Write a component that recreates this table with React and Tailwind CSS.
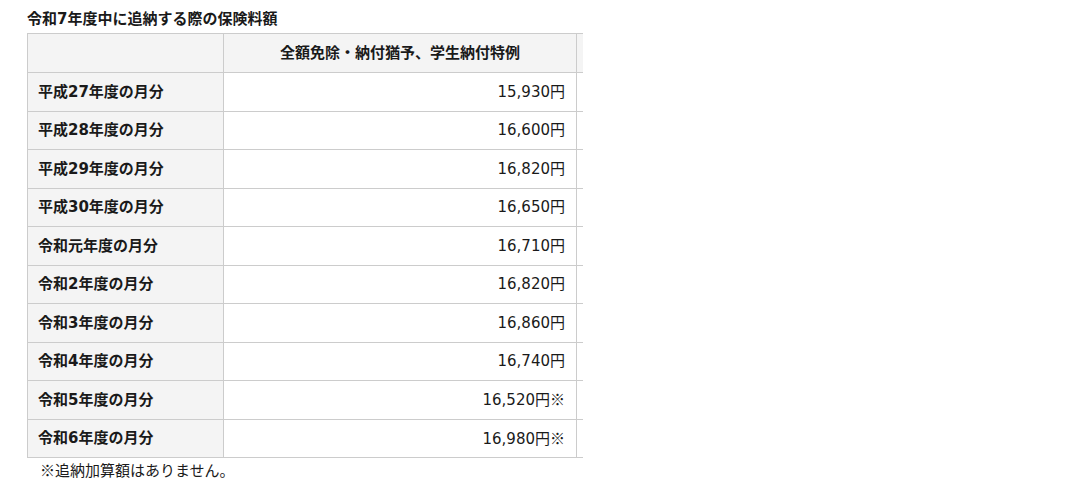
const rows = [
  ["平成27年度の月分", "15,930円"],
  ["平成28年度の月分", "16,600円"],
  ["平成29年度の月分", "16,820円"],
  ["平成30年度の月分", "16,650円"],
  ["令和元年度の月分", "16,710円"],
  ["令和2年度の月分", "16,820円"],
  ["令和3年度の月分", "16,860円"],
  ["令和4年度の月分", "16,740円"],
  ["令和5年度の月分", "16,520円", true],
  ["令和6年度の月分", "16,980円", true],
];

const cjk = { fontFamily: '"Noto Sans CJK JP", sans-serif' };

const App = () => {
  return (
    <div
      className="w-[1088px] h-[490px] bg-white text-[#1a1a1a] pl-[27px] pt-[9px]"
      style={{ fontFamily: '"DejaVu Sans", "Noto Sans CJK JP", sans-serif' }}
    >
      <h2 className="text-[15px] font-bold leading-[20px] h-[24px]">
        令和7年度中に追納する際の保険料額
      </h2>

      <table className="border-collapse text-[15px]">
        <thead>
          <tr className="h-[39px] bg-[#f4f4f4]">
            <th className="w-[196px] border border-[#cccccc]"></th>
            <th className="w-[353px] border border-[#cccccc] font-bold text-center">
              全額免除・納付猶予、学生納付特例
            </th>
            <th className="w-[6px] border-y border-[#cccccc]"></th>
          </tr>
        </thead>
        <tbody>
          {rows.map(([label, amount, note]) => (
            <tr key={label} className="h-[38.5px]">
              <th className="border border-[#cccccc] bg-[#f4f4f4] text-left font-bold pl-[10px]">
                {label}
              </th>
              <td className="border border-[#cccccc] text-right pr-[11px]">
                {amount}
                {note && <span style={cjk}>※</span>}
              </td>
              <td className="border-y border-[#cccccc]"></td>
            </tr>
          ))}
        </tbody>
      </table>

      <p className="text-[15px] leading-[22px] pl-[13px] mt-[1px]">
        <span style={cjk}>※</span>追納加算額はありません。
      </p>
    </div>
  );
};

export default App;
